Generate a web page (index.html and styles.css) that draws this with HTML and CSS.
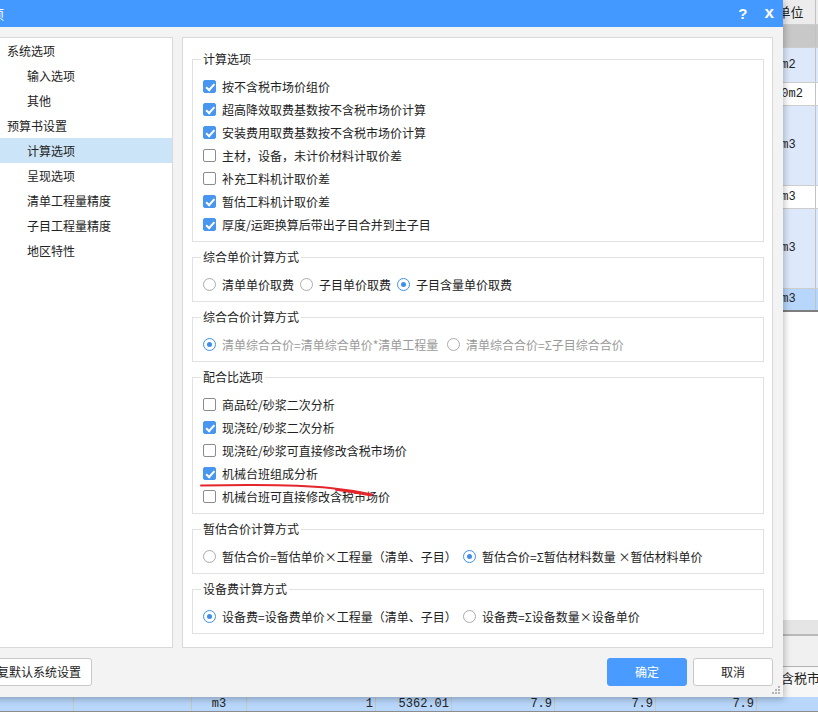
FILE: index.html
```html
<!DOCTYPE html>
<html lang="zh-CN">
<head>
<meta charset="utf-8">
<title>选项</title>
<link rel="stylesheet" href="styles.css">
</head>
<body>
<div class="app">
  <div class="top-pane">
    <div class="trow hdr"><div class="rest"></div><div class="u">单位</div><div class="e"></div></div>
    <div class="trow grp"><div class="rest"></div><div class="u"></div><div class="e"></div></div>
    <div class="trow alt h34"><div class="rest"></div><div class="u">m2</div><div class="e"></div></div>
    <div class="trow h22"><div class="rest"></div><div class="u">10m2</div><div class="e"></div></div>
    <div class="trow alt h79"><div class="rest"></div><div class="u">m3</div><div class="e"></div></div>
    <div class="trow h22"><div class="rest"></div><div class="u">m3</div><div class="e"></div></div>
    <div class="trow alt h79"><div class="rest"></div><div class="u">m3</div><div class="e"></div></div>
    <div class="trow sel"><div class="rest"></div><div class="u">m3</div><div class="e"></div></div>
  </div>
  <div class="band"></div>
  <div class="lower-gap"></div>
  <div class="lrow lhdr">
    <div class="lc c1"></div><div class="lc c2"></div><div class="lc c3"></div><div class="lc c4"></div>
    <div class="lc c5"></div><div class="lc c6"></div><div class="lc c7"></div><div class="lc c8"></div>
    <div class="lc c9 htext">含税市场价</div>
  </div>
  <div class="lrow ldata">
    <div class="lc c1"></div><div class="lc c2"></div><div class="lc c3 ctr">m3</div><div class="lc c4 num">1</div>
    <div class="lc c5 num">5362.01</div><div class="lc c6 num">7.9</div><div class="lc c7 num">7.9</div><div class="lc c8 num">7.9</div>
    <div class="lc c9"></div>
  </div>
</div>

<div class="dialog">
  <div class="titlebar">
    <span class="title">选项</span>
    <span class="tb-btns"><span class="help">?</span><span class="close">x</span></span>
  </div>
  <div class="dlg-body">
    <div class="panels">
      <div class="tree">
        <div class="node">系统选项</div>
        <div class="node child">输入选项</div>
        <div class="node child">其他</div>
        <div class="node">预算书设置</div>
        <div class="node child active">计算选项</div>
        <div class="node child">呈现选项</div>
        <div class="node child">清单工程量精度</div>
        <div class="node child">子目工程量精度</div>
        <div class="node child">地区特性</div>
      </div>
      <div class="settings">
        <fieldset class="group">
          <legend>计算选项</legend>
          <div class="item"><span class="cb on"></span>按不含税市场价组价</div>
          <div class="item"><span class="cb on"></span>超高降效取费基数按不含税市场价计算</div>
          <div class="item"><span class="cb on"></span>安装费用取费基数按不含税市场价计算</div>
          <div class="item"><span class="cb"></span>主材，设备，未计价材料计取价差</div>
          <div class="item"><span class="cb"></span>补充工料机计取价差</div>
          <div class="item"><span class="cb on"></span>暂估工料机计取价差</div>
          <div class="item"><span class="cb on"></span>厚度/运距换算后带出子目合并到主子目</div>
        </fieldset>
        <fieldset class="group">
          <legend>综合单价计算方式</legend>
          <div class="radios">
            <span class="ropt"><span class="rd"></span>清单单价取费</span>
            <span class="ropt"><span class="rd"></span>子目单价取费</span>
            <span class="ropt"><span class="rd on"></span>子目含量单价取费</span>
          </div>
        </fieldset>
        <fieldset class="group">
          <legend>综合合价计算方式</legend>
          <div class="radios disabled">
            <span class="ropt w244"><span class="rd on"></span>清单综合合价=清单综合单价*清单工程量</span>
            <span class="ropt"><span class="rd"></span>清单综合合价=Σ子目综合合价</span>
          </div>
        </fieldset>
        <fieldset class="group">
          <legend>配合比选项</legend>
          <div class="item"><span class="cb"></span>商品砼/砂浆二次分析</div>
          <div class="item"><span class="cb on"></span>现浇砼/砂浆二次分析</div>
          <div class="item"><span class="cb"></span>现浇砼/砂浆可直接修改含税市场价</div>
          <div class="item"><span class="cb on"></span>机械台班组成分析</div>
          <div class="item"><span class="cb"></span>机械台班可直接修改含税市场价</div>
        </fieldset>
        <fieldset class="group">
          <legend>暂估合价计算方式</legend>
          <div class="radios">
            <span class="ropt w260"><span class="rd"></span>暂估合价=暂估单价×工程量（清单、子目）</span>
            <span class="ropt"><span class="rd on"></span>暂估合价=Σ暂估材料数量 ×暂估材料单价</span>
          </div>
        </fieldset>
        <fieldset class="group last">
          <legend>设备费计算方式</legend>
          <div class="radios">
            <span class="ropt w260"><span class="rd on"></span>设备费=设备费单价×工程量（清单、子目）</span>
            <span class="ropt"><span class="rd"></span>设备费=Σ设备数量×设备单价</span>
          </div>
        </fieldset>
      </div>
    </div>
    <div class="footer">
      <button class="btn reset">恢复默认系统设置</button>
      <div class="right-btns">
        <button class="btn primary">确定</button>
        <button class="btn cancel">取消</button>
      </div>
    </div>
  </div>
  <svg class="grip" width="8" height="8" viewBox="0 0 8 8">
    <rect x="6" y="0" width="2" height="2" fill="#b5b5b5"/>
    <rect x="3" y="3" width="2" height="2" fill="#b5b5b5"/>
    <rect x="6" y="3" width="2" height="2" fill="#b5b5b5"/>
    <rect x="0" y="6" width="2" height="2" fill="#b5b5b5"/>
    <rect x="3" y="6" width="2" height="2" fill="#b5b5b5"/>
    <rect x="6" y="6" width="2" height="2" fill="#b5b5b5"/>
  </svg>
</div>

<svg class="annot" width="818" height="712" viewBox="0 0 818 712">
  <path d="M201 485.5 C 250 484.5, 300 485, 330 488 C 345 489.5, 360 492, 372 494.5" fill="none" stroke="#e3262b" stroke-width="2" stroke-linecap="round"/>
  <path d="M336 489.8 C 350 491.5, 362 493.8, 371 495.5" fill="none" stroke="#e3262b" stroke-width="2" stroke-linecap="round"/>
</svg>
</body>
</html>
```

FILE: styles.css
```css
* { box-sizing: border-box; }
html, body { margin: 0; padding: 0; }
body {
  width: 818px;
  height: 712px;
  overflow: hidden;
  position: relative;
  background: #fff;
  font-family: "Noto Sans CJK SC", "Noto Sans", sans-serif;
  font-size: 12px;
  color: #222;
}

/* ---------- background application ---------- */
.app {
  width: 818px;
  height: 712px;
  display: flex;
  flex-direction: column;
  overflow: hidden;
}
.top-pane {
  height: 620px;
  flex: none;
  background: #fff;
}
.trow {
  display: flex;
  border-bottom: 1px solid #cdcdcd;
  font-family: "Liberation Mono", monospace;
  font-size: 12px;
}
.trow .rest { flex: 1; }
.trow .u {
  width: 53px;
  text-align: center;
  white-space: nowrap;
}
.trow .e {
  width: 3px;
  border-left: 1px solid #c2c2c2;
}
.trow.hdr { height: 25px; background: #ececec; }
.trow.hdr .u {
  font-family: "Noto Sans CJK SC", sans-serif;
  font-size: 13px;
  line-height: 24px;
  padding-left: 4px;
}
.trow.grp { height: 23px; background: #c8c8c8; }
.trow.alt { background: #dde9fb; }
.trow.h34 { height: 35px; }
.trow.h34 .u { line-height: 34px; }
.trow.h22 { height: 23px; }
.trow.h22 .u { line-height: 22px; }
.trow.h79 { height: 80px; }
.trow.h79 .u { line-height: 79px; }
.trow.sel {
  height: 23px;
  background: #b7d6fb;
  border-bottom: 2px solid #7e7e7e;
}
.trow.sel .u { line-height: 21px; }

.band {
  height: 16px;
  flex: none;
  background: #e5e5e5;
  border-bottom: 2px solid #b9b9b9;
}
.lower-gap {
  height: 30px;
  flex: none;
  background: #f0f0f0;
}
.lrow {
  display: flex;
  flex: none;
}
.lhdr {
  height: 31px;
  background: #f7f7f7;
  border-top: 1px solid #b3b3b3;
}
.ldata {
  height: 15px;
  background: #b8d7fb;
  border-bottom: 1px solid #8c8c8c;
  font-family: "Liberation Mono", monospace;
  font-size: 12px;
  line-height: 14px;
}
.lc {
  border-right: 1px solid #c9c6ba;
  flex: none;
  white-space: nowrap;
  overflow: hidden;
}
.lhdr .lc { border-right-color: #d4d4d4; }
.c1 { width: 74px; }
.c2 { width: 118px; }
.c3 { width: 55px; }
.c4 { width: 129px; }
.c5 { width: 76px; }
.c6 { width: 103px; }
.c7 { width: 101px; }
.c8 { width: 101px; }
.c9 { flex: 1; border-right: none; }
.ctr { text-align: center; }
.num { text-align: right; padding-right: 2px; }
.htext {
  font-size: 13px;
  line-height: 16px;
  padding: 3px 0 0 24px;
  color: #222;
}

/* ---------- dialog ---------- */
.dialog {
  position: absolute;
  left: -36px;
  top: 0;
  width: 819px;
  height: 697px;
  background: #f3f3f3;
  box-shadow: 1px 2px 7px rgba(0, 0, 0, 0.28);
  display: flex;
  flex-direction: column;
}
.titlebar {
  height: 27px;
  flex: none;
  background: #4399ff;
  color: #fff;
  display: flex;
  align-items: center;
  justify-content: space-between;
  padding-left: 14px;
}
.title { font-size: 13px; }
.tb-btns {
  display: flex;
  align-items: center;
  font-family: "Liberation Sans", sans-serif;
  font-weight: bold;
  font-size: 15px;
  margin-right: 9px;
}
.help { margin-right: 17px; }
.close { font-size: 17px; line-height: 15px; padding-bottom: 2px; }

.dlg-body {
  flex: 1;
  display: flex;
  flex-direction: column;
  padding: 10px 10px 11px;
}
.panels {
  display: flex;
  height: 611px;
  flex: none;
}
.tree {
  width: 199px;
  flex: none;
  background: #fff;
  border: 1px solid #d9d9d9;
}
.node {
  height: 25px;
  line-height: 25px;
  padding-left: 32px;
  color: #222;
}
.node.child { padding-left: 52px; }
.node.active { background: #cce4f7; }

.settings {
  margin-left: 9px;
  width: 591px;
  flex: none;
  background: #fff;
  border: 1px solid #d9d9d9;
  padding: 13px 8px 13px 9px;
}
.group {
  margin: 0 0 7px;
  padding: 8px 8px 5px;
  border: 1px solid #e1e1e1;
  min-width: 0;
}
.group.last { margin-bottom: 0; }
.group legend {
  padding: 0 2px;
  font-size: 12px;
  line-height: 16px;
  color: #222;
}
.item {
  height: 23px;
  display: flex;
  align-items: center;
  padding-left: 2px;
  white-space: nowrap;
}
.cb {
  width: 13px;
  height: 13px;
  flex: none;
  border: 1px solid #8c8c8c;
  border-radius: 2px;
  background: #fff;
  margin-right: 6px;
  position: relative;
}
.cb.on {
  background: #4896f0;
  border-color: #4896f0;
}
.cb.on::after {
  content: "";
  position: absolute;
  left: 3.5px;
  top: 1px;
  width: 3px;
  height: 6.5px;
  border: solid #fff;
  border-width: 0 2px 2px 0;
  transform: rotate(42deg);
}
.radios {
  height: 23px;
  display: flex;
  align-items: center;
  padding-left: 2px;
  white-space: nowrap;
}
.radios.disabled { color: #9a9a9a; }
.ropt {
  display: flex;
  align-items: center;
  margin-right: 6px;
  flex: none;
}
.ropt.w244 { width: 244px; margin-right: 0; }
.ropt.w260 { width: 260px; margin-right: 0; }
.rd {
  width: 13px;
  height: 13px;
  flex: none;
  border: 1px solid #ababab;
  border-radius: 50%;
  background: #fff;
  margin-right: 6px;
  display: flex;
  align-items: center;
  justify-content: center;
}
.rd.on { border-color: #3f8fea; }
.rd.on::after {
  content: "";
  width: 5px;
  height: 5px;
  border-radius: 50%;
  background: #3f8fea;
}

.footer {
  display: flex;
  justify-content: space-between;
  padding-top: 10px;
}
.btn {
  height: 28px;
  margin: 0;
  border: 1px solid #c8c8c8;
  border-radius: 3px;
  background: #fff;
  font-family: "Noto Sans CJK SC", sans-serif;
  font-size: 12px;
  color: #222;
  padding: 0;
  line-height: 26px;
}
.reset { width: 118px; }
.right-btns { display: flex; gap: 6px; }
.primary {
  width: 80px;
  background: #4a9bff;
  border-color: #4a9bff;
  color: #fff;
}
.cancel { width: 80px; }

.grip {
  position: absolute;
  right: 3px;
  bottom: 3px;
}

.annot {
  position: absolute;
  left: 0;
  top: 0;
  pointer-events: none;
}
```
